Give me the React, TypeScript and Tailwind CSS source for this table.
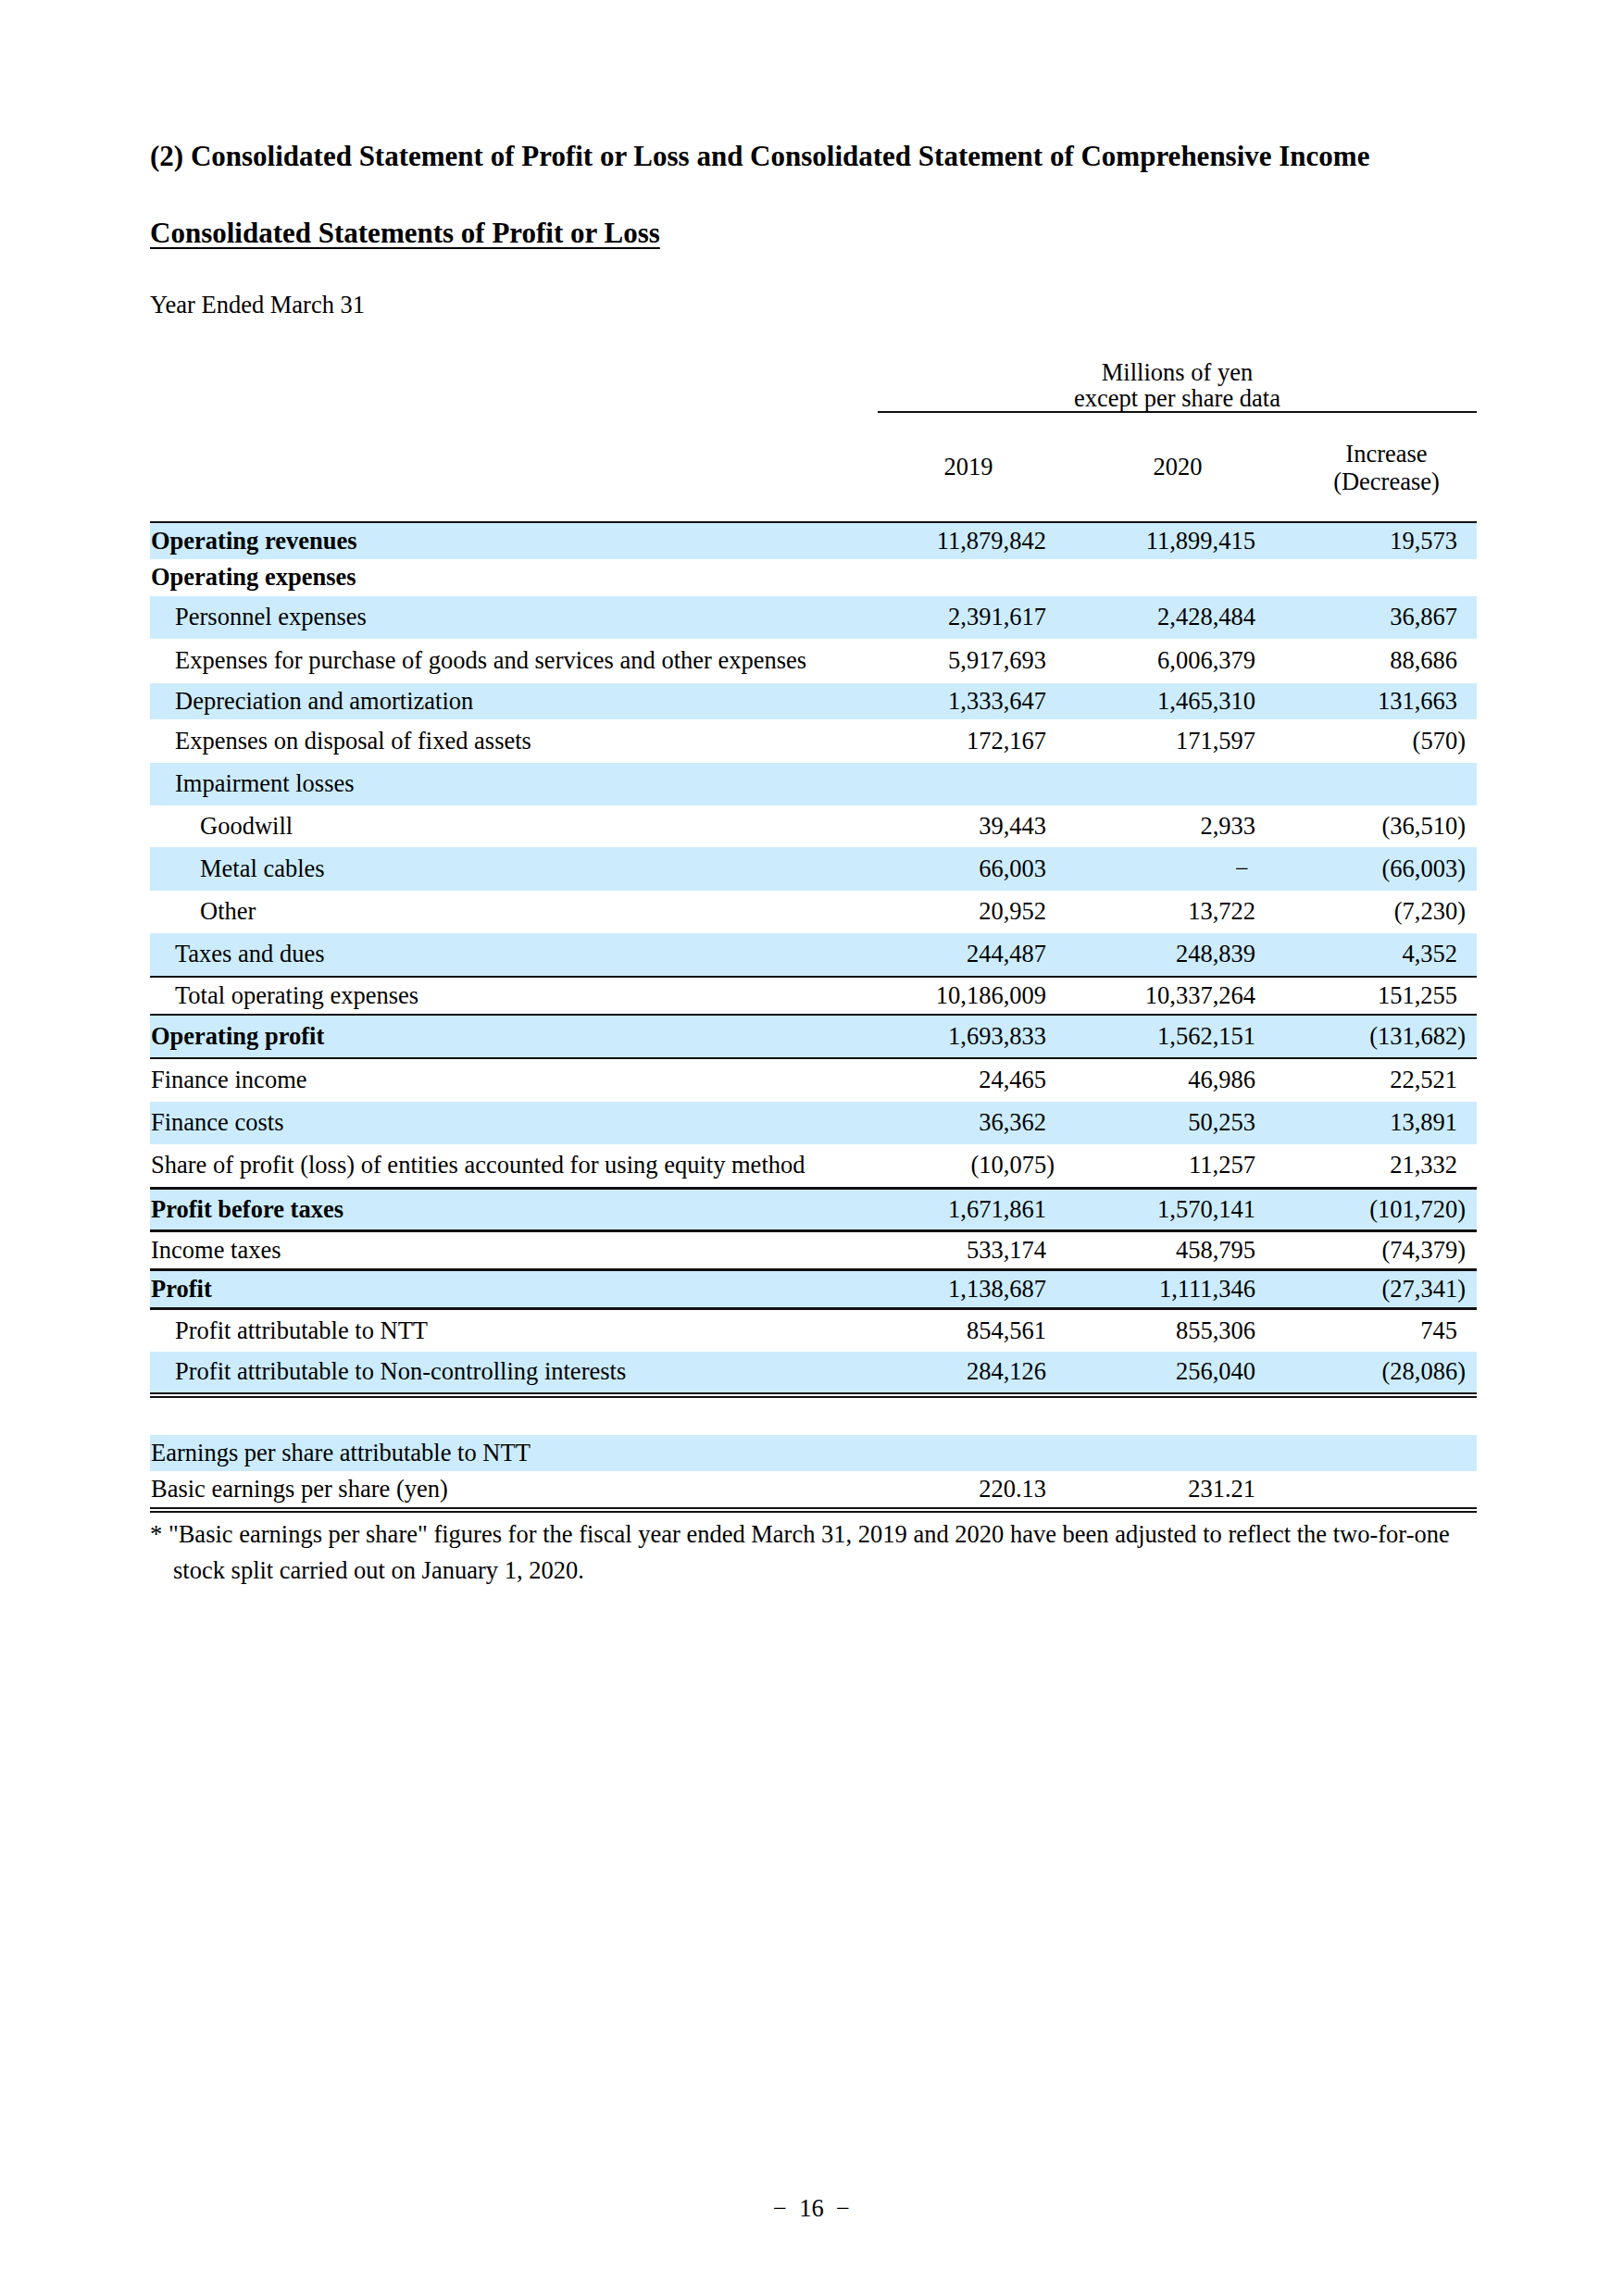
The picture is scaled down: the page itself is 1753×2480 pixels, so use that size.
type Row = {
  label: string;
  a?: string;
  b?: string;
  c?: string;
  level?: 0 | 1 | 2;
  bold?: boolean;
  band?: boolean;
  h: string;
  line?: string;
};

const rows: Row[] = [
  { label: 'Operating revenues', a: '11,879,842', b: '11,899,415', c: '19,573', bold: true, band: true, h: 'h-[39px]' },
  { label: 'Operating expenses', bold: true, h: 'h-[40px]' },
  { label: 'Personnel expenses', a: '2,391,617', b: '2,428,484', c: '36,867', level: 1, band: true, h: 'h-[46px]' },
  { label: 'Expenses for purchase of goods and services and other expenses', a: '5,917,693', b: '6,006,379', c: '88,686', level: 1, h: 'h-[48px]' },
  { label: 'Depreciation and amortization', a: '1,333,647', b: '1,465,310', c: '131,663', level: 1, band: true, h: 'h-[39px]' },
  { label: 'Expenses on disposal of fixed assets', a: '172,167', b: '171,597', c: '(570)', level: 1, h: 'h-[47px]' },
  { label: 'Impairment losses', level: 1, band: true, h: 'h-[46px]' },
  { label: 'Goodwill', a: '39,443', b: '2,933', c: '(36,510)', level: 2, h: 'h-[45px]' },
  { label: 'Metal cables', a: '66,003', b: '−', c: '(66,003)', level: 2, band: true, h: 'h-[47px]' },
  { label: 'Other', a: '20,952', b: '13,722', c: '(7,230)', level: 2, h: 'h-[46px]' },
  { label: 'Taxes and dues', a: '244,487', b: '248,839', c: '4,352', level: 1, band: true, h: 'h-[48px]', line: 'border-b-2' },
  { label: 'Total operating expenses', a: '10,186,009', b: '10,337,264', c: '151,255', level: 1, h: 'h-[41px]', line: 'border-b-2' },
  { label: 'Operating profit', a: '1,693,833', b: '1,562,151', c: '(131,682)', bold: true, band: true, h: 'h-[47px]', line: 'border-b-2' },
  { label: 'Finance income', a: '24,465', b: '46,986', c: '22,521', h: 'h-[46px]' },
  { label: 'Finance costs', a: '36,362', b: '50,253', c: '13,891', band: true, h: 'h-[46px]' },
  { label: 'Share of profit (loss) of entities accounted for using equity method', a: '(10,075)', b: '11,257', c: '21,332', h: 'h-[49px]', line: 'border-b-[3px]' },
  { label: 'Profit before taxes', a: '1,671,861', b: '1,570,141', c: '(101,720)', bold: true, band: true, h: 'h-[46px]', line: 'border-b-[3px]' },
  { label: 'Income taxes', a: '533,174', b: '458,795', c: '(74,379)', h: 'h-[42px]', line: 'border-b-[3px]' },
  { label: 'Profit', a: '1,138,687', b: '1,111,346', c: '(27,341)', bold: true, band: true, h: 'h-[42px]', line: 'border-b-[3px]' },
  { label: 'Profit attributable to NTT', a: '854,561', b: '855,306', c: '745', level: 1, h: 'h-[45px]' },
  { label: 'Profit attributable to Non-controlling interests', a: '284,126', b: '256,040', c: '(28,086)', level: 1, band: true, h: 'h-[50px]', line: 'border-b-[6px] border-double' },
];

const epsRows: Row[] = [
  { label: 'Earnings per share attributable to NTT', band: true, h: 'h-[39px]' },
  { label: 'Basic earnings per share (yen)', a: '220.13', b: '231.21', h: 'h-[45px]', line: 'border-b-[6px] border-double' },
];

const indent = ['pl-[1px]', 'pl-[27px]', 'pl-[54px]'];

function Num({ v }: { v?: string }) {
  if (!v) return null;
  if (v === '−') return <span className="mr-[7px]">−</span>;
  if (v.startsWith('(')) {
    return (
      <>
        {v.slice(0, -1)}
        <span className="-mr-[9px]">)</span>
      </>
    );
  }
  return <>{v}</>;
}

function TableRow({ row }: { row: Row }) {
  return (
    <div
      className={`grid grid-cols-[786px_226px_226px_195px] items-center bg-clip-padding border-[#111] ${row.h} ${row.line ?? ''} ${row.band ? 'bg-[#ccecfd]' : ''}`}
    >
      <div className={`${indent[row.level ?? 0]} ${row.bold ? 'font-bold' : ''} whitespace-nowrap`}>{row.label}</div>
      <div className="text-right pr-[44px]"><Num v={row.a} /></div>
      <div className="text-right pr-[44px]"><Num v={row.b} /></div>
      <div className="text-right pr-[21px]"><Num v={row.c} /></div>
    </div>
  );
}

export default function App() {
  return (
    <div className="w-[1753px] min-h-[2480px] bg-white text-black font-['Liberation_Serif',serif] text-[26.5px] pl-[162px] pt-[149px]">
      <h1 className="text-[31px] font-bold leading-[40px]">
        (2) Consolidated Statement of Profit or Loss and Consolidated Statement of Comprehensive Income
      </h1>
      <h2 className="mt-[43px] text-[31px] font-bold leading-[40px] underline decoration-2 underline-offset-[5px]">
        Consolidated Statements of Profit or Loss
      </h2>
      <p className="mt-[37px] leading-[40px]">Year Ended March 31</p>

      <div className="w-[1433px] mt-[39px]">
        {/* column header */}
        <div className="grid grid-cols-[786px_647px]">
          <div />
          <div className="text-center leading-[28px] border-b-2 border-[#111] h-[58px]">
            Millions of yen
            <br />
            except per share data
          </div>
        </div>
        <div className="grid grid-cols-[786px_226px_226px_195px] items-center h-[119px] border-b-2 border-[#111]">
          <div />
          <div className="text-center pr-[30px]">2019</div>
          <div className="text-center pr-[30px]">2020</div>
          <div className="text-center leading-[30px]">
            Increase
            <br />
            (Decrease)
          </div>
        </div>

        {rows.map((r) => (
          <TableRow key={r.label} row={r} />
        ))}

        <div className="h-[40px]" />

        {epsRows.map((r) => (
          <TableRow key={r.label} row={r} />
        ))}

        {/* footnote */}
        <div className="mt-[4px] leading-[39px] whitespace-nowrap">
          <p>* "Basic earnings per share" figures for the fiscal year ended March 31, 2019 and 2020 have been adjusted to reflect the two-for-one</p>
          <p className="pl-[25px]">stock split carried out on January 1, 2020.</p>
        </div>
      </div>

      <div className="w-[1429px] mt-[649px] text-center leading-[40px]">−&nbsp;&nbsp;16&nbsp;&nbsp;−</div>
    </div>
  );
}
